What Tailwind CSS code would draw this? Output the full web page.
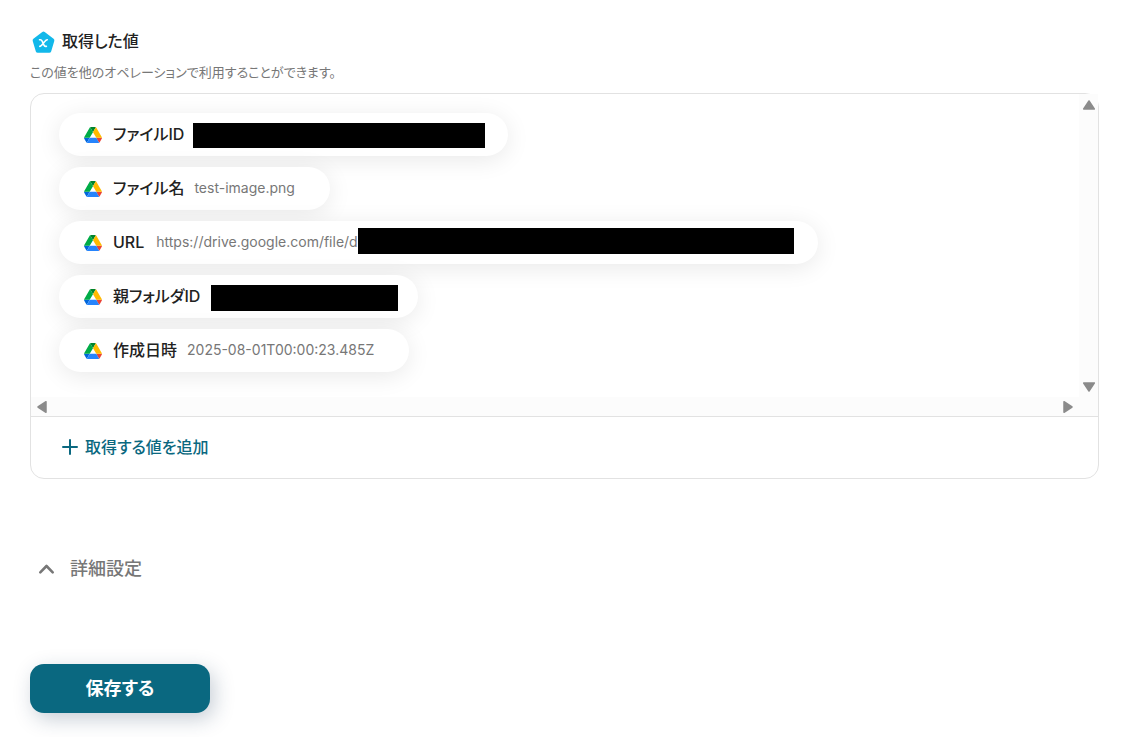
<!DOCTYPE html>
<html lang="ja">
<head>
<meta charset="utf-8">
<meta name="viewport" content="width=device-width, initial-scale=1">
<title>取得した値</title>
<script src="https://cdn.jsdelivr.net/npm/@tailwindcss/browser@4"></script>
</head>
<body class="bg-white font-['Inter','Noto_Sans_CJK_JP',sans-serif] text-base text-[#222] [font-feature-settings:'palt']">
<svg class="hidden" aria-hidden="true">
  <symbol id="drive" viewBox="0 0 87.3 78">
    <path fill="#0066da" d="m6.6 66.85 3.85 6.65c.8 1.4 1.95 2.5 3.3 3.3l13.75-23.8h-27.5c0 1.55.4 3.1 1.2 4.5z"/>
    <path fill="#00ac47" d="m43.65 25-13.75-23.8c-1.35.8-2.5 1.9-3.3 3.3l-25.4 44a9.06 9.06 0 0 0 -1.2 4.5h27.5z"/>
    <path fill="#ea4335" d="m73.55 76.8c1.35-.8 2.5-1.9 3.3-3.3l1.6-2.75 7.65-13.25c.8-1.4 1.2-2.95 1.2-4.5h-27.502l5.852 11.5z"/>
    <path fill="#00832d" d="m43.65 25 13.75-23.8c-1.35-.8-2.9-1.2-4.5-1.2h-18.5c-1.6 0-3.15.45-4.5 1.2z"/>
    <path fill="#2684fc" d="m59.8 53h-32.3l-13.75 23.8c1.35.8 2.9 1.2 4.5 1.2h50.8c1.6 0 3.15-.45 4.5-1.2z"/>
    <path fill="#ffba00" d="m73.4 26.5-12.7-22c-.8-1.4-1.95-2.5-3.3-3.3l-13.75 23.8 16.15 28h27.45c0-1.55-.4-3.1-1.2-4.5z"/>
  </symbol>
</svg>
<main class="px-[30px] pt-7 pr-[35px] pb-6">
  <header>
    <h1 class="flex h-7 items-center gap-[7px] pl-[2px] font-medium">
      <svg class="size-[23px]" viewBox="0 0 22 22" aria-hidden="true">
        <path d="M11 2.500 19.500 9 16.500 19H5.500L2.500 9Z" fill="#12b8ea" stroke="#12b8ea" stroke-width="3.800" stroke-linejoin="round"/>
        <path d="M7.200 8.300h.8c.9 0 1.300.5 1.700 1.400l1.600 3.600c.4.9.8 1.400 1.700 1.400h.8M14.600 8.300c-1.300 0-2.200 1.300-3.600 3.200s-2.300 3.200-3.600 3.200" fill="none" stroke="#fff" stroke-width="1.500" stroke-linecap="round"/>
      </svg>
      <span class="pb-0.5">取得した値</span>
    </h1>
    <p class="mt-2 text-[13px] leading-4 text-[#777]">この値を他のオペレーションで利用することができます。</p>
  </header>

  <section class="mt-[13px] rounded-[14px] border border-[#e2e2e2]">
    <div class="grid grid-cols-[1fr_19px] grid-rows-[auto_19px]">
      <ul class="flex flex-col items-start gap-[11px] overflow-hidden rounded-tl-[14px] pt-[19px] pb-[25px] pl-7">
        <li class="flex h-[43px] items-center rounded-full bg-white pr-[23px] pl-[25px] shadow-[0_4px_24px_rgba(0,0,0,0.09)]">
          <svg class="mr-[11px] h-4 w-[18px]" aria-hidden="true"><use href="#drive"/></svg>
          <span class="pb-0.5 font-medium">ファイルID</span>
          <span class="mt-0.5 ml-[9px] h-[25px] w-[292px] bg-black"></span>
        </li>
        <li class="flex h-[43px] items-center rounded-full bg-white pr-[35px] pl-[25px] shadow-[0_4px_24px_rgba(0,0,0,0.09)]">
          <svg class="mr-[11px] h-4 w-[18px]" aria-hidden="true"><use href="#drive"/></svg>
          <span class="pb-0.5 font-medium">ファイル名</span>
          <span class="ml-[10px] pb-0.5 text-sm text-[#777]">test-image.png</span>
        </li>
        <li class="flex h-[43px] items-center rounded-full bg-white pr-6 pl-[25px] shadow-[0_4px_24px_rgba(0,0,0,0.09)]">
          <svg class="mr-[11px] h-4 w-[18px]" aria-hidden="true"><use href="#drive"/></svg>
          <span class="pb-0.5 font-medium">URL</span>
          <span class="ml-3 w-[202px] overflow-hidden pb-0.5 text-sm whitespace-nowrap text-[#777]">https://drive.google.com/file/d</span>
          <span class="mb-1 h-[26px] w-[436px] bg-black"></span>
        </li>
        <li class="flex h-[43px] items-center rounded-full bg-white pr-5 pl-[25px] shadow-[0_4px_24px_rgba(0,0,0,0.09)]">
          <svg class="mr-[11px] h-4 w-[18px]" aria-hidden="true"><use href="#drive"/></svg>
          <span class="pb-0.5 font-medium">親フォルダID</span>
          <span class="mt-0.5 ml-[11px] h-[26px] w-[187px] bg-black"></span>
        </li>
        <li class="flex h-[43px] items-center rounded-full bg-white pr-[35px] pl-[25px] shadow-[0_4px_24px_rgba(0,0,0,0.09)]">
          <svg class="mr-[11px] h-4 w-[18px]" aria-hidden="true"><use href="#drive"/></svg>
          <span class="pb-0.5 font-medium">作成日時</span>
          <span class="ml-[10px] pb-0.5 text-sm text-[#777]">2025-08-01T00:00:23.485Z</span>
        </li>
      </ul>
      <div class="flex flex-col items-center justify-between bg-[#fcfcfc] pt-[5px] pb-1">
        <button type="button" class="flex" aria-label="上へスクロール"><svg class="h-3 w-[14px]" viewBox="0 0 14 12"><path d="M7 2 12.300 10H1.700Z" fill="#8b8b8b" stroke="#8b8b8b" stroke-width="1.500" stroke-linejoin="round"/></svg></button>
        <button type="button" class="flex" aria-label="下へスクロール"><svg class="h-3 w-[14px]" viewBox="0 0 14 12"><path d="M7 10 12.300 2H1.700Z" fill="#8b8b8b" stroke="#8b8b8b" stroke-width="1.500" stroke-linejoin="round"/></svg></button>
      </div>
      <div class="col-span-2 flex items-center justify-between bg-[#fcfcfc] pr-6 pl-[5px]">
        <button type="button" class="flex" aria-label="左へスクロール"><svg class="h-[14px] w-3" viewBox="0 0 12 14"><path d="M2 7 10 1.700V12.300Z" fill="#8b8b8b" stroke="#8b8b8b" stroke-width="1.500" stroke-linejoin="round"/></svg></button>
        <button type="button" class="flex" aria-label="右へスクロール"><svg class="h-[14px] w-3" viewBox="0 0 12 14"><path d="M10 7 2 1.700V12.300Z" fill="#8b8b8b" stroke="#8b8b8b" stroke-width="1.500" stroke-linejoin="round"/></svg></button>
      </div>
    </div>
    <div class="border-t border-[#e2e2e2] px-[31px] pt-[18px] pb-[19px]">
      <button type="button" class="flex items-center gap-[7px] font-medium text-[#0a6880]">
        <svg class="size-4" viewBox="0 0 16 16" aria-hidden="true"><path d="M8 1v14M1 8h14" stroke="currentColor" stroke-width="2" stroke-linecap="round"/></svg>
        取得する値を追加
      </button>
    </div>
  </section>

  <button type="button" aria-expanded="false" class="mt-[76px] ml-2 flex items-center gap-[15px] text-lg font-medium text-[#777]">
    <svg class="h-4 w-[17px]" viewBox="0 0 17 16" aria-hidden="true"><path d="M2.300 11.300 8.500 5l6.200 6.300" fill="none" stroke="currentColor" stroke-width="2.600" stroke-linecap="round" stroke-linejoin="round"/></svg>
    詳細設定
  </button>

  <button type="button" class="mt-[81px] h-[49px] w-[180px] rounded-[14px] bg-[#0a6880] text-lg font-bold text-white shadow-[4px_6px_20px_rgba(30,60,90,0.25)]">保存する</button>
</main>
</body>
</html>
